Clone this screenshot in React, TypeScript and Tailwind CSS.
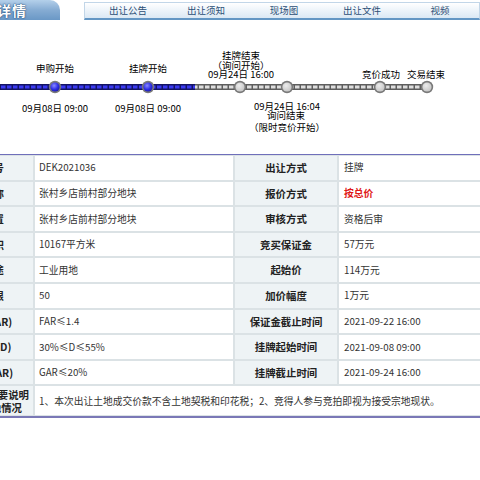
import React from "react";

const navItems = ["出让公告", "出让须知", "现场图", "出让文件", "视频"];

type Row = { l1: string; v1: string; l2: string; v2: string; red?: boolean };

const rows: Row[] = [
  { l1: "宗地编号", v1: "DEK2021036", l2: "出让方式", v2: "挂牌" },
  { l1: "宗地名称", v1: "张村乡店前村部分地块", l2: "报价方式", v2: "按总价", red: true },
  { l1: "宗地位置", v1: "张村乡店前村部分地块", l2: "审核方式", v2: "资格后审" },
  { l1: "出让面积", v1: "10167平方米", l2: "竞买保证金", v2: "57万元" },
  { l1: "土地用途", v1: "工业用地", l2: "起始价", v2: "114万元" },
  { l1: "出让年限", v1: "50", l2: "加价幅度", v2: "1万元" },
  { l1: "容积率(FAR)", v1: "FAR≤1.4", l2: "保证金截止时间", v2: "2021-09-22 16:00" },
  { l1: "建筑密度(D)", v1: "30%≤D≤55%", l2: "挂牌起始时间", v2: "2021-09-08 09:00" },
  { l1: "绿地率(GAR)", v1: "GAR≤20%", l2: "挂牌截止时间", v2: "2021-09-24 16:00" },
];

// timeline nodes: x center, reached?
const nodes = [
  { x: 55, on: true },
  { x: 148, on: true },
  { x: 240, on: false },
  { x: 287, on: false },
  { x: 380, on: false },
  { x: 427, on: false },
];

function Label({ x, y, children }: { x: number; y: number; children: React.ReactNode }) {
  return (
    <div
      className="absolute -translate-x-1/2 whitespace-nowrap text-[9.5px] leading-[11px] text-black"
      style={{ left: x, top: y - 5.5 }}
    >
      {children}
    </div>
  );
}

function Track() {
  return (
    <svg width="480" height="16" viewBox="0 0 480 16" className="absolute left-0" style={{ top: 57 }}>
      <defs>
        <pattern id="bluePat" x="0" y="0" width="6" height="6" patternUnits="userSpaceOnUse">
          <rect width="6" height="6" fill="#141464" />
          <rect x="1" y="1.5" width="4.5" height="3" fill="#3a3af2" />
        </pattern>
        <pattern id="greyPat" x="0" y="0" width="6" height="6" patternUnits="userSpaceOnUse">
          <rect width="6" height="6" fill="#5e5e5e" />
          <rect x="1" y="1.5" width="4.5" height="3" fill="#dedede" />
        </pattern>
        <radialGradient id="blueNode" cx="0.4" cy="0.35" r="0.7">
          <stop offset="0" stopColor="#8a8aff" />
          <stop offset="0.6" stopColor="#2f2fe6" />
          <stop offset="1" stopColor="#1a1aa8" />
        </radialGradient>
        <radialGradient id="greyNode" cx="0.4" cy="0.35" r="0.7">
          <stop offset="0" stopColor="#ececec" />
          <stop offset="1" stopColor="#c4c4c4" />
        </radialGradient>
      </defs>
      <g transform="translate(0,5)">
        <rect x="0" y="0" width="195" height="6" fill="url(#bluePat)" />
        <rect x="195" y="0" width="232" height="6" fill="url(#greyPat)" />
      </g>
      {nodes.map((n) => (
        <g key={n.x}>
          <circle cx={n.x} cy="8" r="6.2" fill="#7a7a7a" />
          <circle cx={n.x} cy="8" r="4.6" fill={n.on ? "url(#blueNode)" : "url(#greyNode)"} />
        </g>
      ))}
    </svg>
  );
}

export default function App() {
  return (
    <div className="w-[480px] h-[480px] overflow-hidden bg-white font-['Noto_Sans_CJK_SC','Noto_Sans',sans-serif]">
      {/* Header tabs */}
      <div className="flex items-start h-[22px]">
        <div className="w-[74px] h-[20px] rounded-tr-[10px] bg-gradient-to-b from-[#b4d0ea] via-[#86acd3] to-[#6a98c6] flex items-center overflow-hidden">
          <span className="ml-[-3px] text-[14px] font-bold leading-none tracking-[1px] text-white [text-shadow:0_0_2px_#1b4a7a,0_0_1px_#1b4a7a]">
            详情
          </span>
        </div>
        <div className="ml-[24px] mt-[2px] flex-1 h-[18px] pl-[4px] flex bg-gradient-to-b from-white to-[#dbe8f4] border border-[#c2d6e8] border-b-2 border-b-[#6396c4]">
          {navItems.map((t) => (
            <div key={t} className="w-[78px] shrink-0 flex items-center justify-center text-[9.5px] text-[#2b4e75]">
              {t}
            </div>
          ))}
        </div>
      </div>

      {/* Progress timeline */}
      <div className="relative h-[132px]">
        <Label x={55} y={46}>申购开始</Label>
        <Label x={148} y={46}>挂牌开始</Label>
        <Label x={241} y={33}>挂牌结束</Label>
        <Label x={241} y={43}>（询问开始）</Label>
        <Label x={241} y={52}>09月24日 16:00</Label>
        <Label x={381} y={52}>竞价成功</Label>
        <Label x={426} y={52}>交易结束</Label>
        <Track />
        <Label x={55} y={86}>09月08日 09:00</Label>
        <Label x={148} y={86}>09月08日 09:00</Label>
        <Label x={287} y={84}>09月24日 16:04</Label>
        <Label x={286} y={93}>询问结束</Label>
        <Label x={287} y={105}>（限时竞价开始）</Label>
      </div>

      {/* Detail table */}
      <div className="overflow-hidden border-t-[1.5px] border-t-[#6f6fba] border-b-2 border-b-[#7a78b6]">
        <div className="ml-[-67px] w-[620px] grid grid-cols-[100px_198px_102px_280px] gap-[2px] pt-[1px] pb-[1px] bg-[#dbe2e5] text-[9.75px] text-[#333]">
          {rows.map((r) => (
            <React.Fragment key={r.l1}>
              <div className="h-[23.6px] bg-[#eef3f5] flex items-center justify-center font-bold text-[10.4px] text-[#222] whitespace-nowrap">
                {r.l1}
              </div>
              <div className="h-[23.6px] bg-white flex items-center pl-[4px]">{r.v1}</div>
              <div className="h-[23.6px] bg-[#eef3f5] flex items-center justify-center font-bold text-[10.4px] text-[#222] whitespace-nowrap">
                {r.l2}
              </div>
              <div className={`h-[23.6px] bg-white flex items-center pl-[5px] ${r.red ? "text-[#e01818] font-bold" : ""}`}>
                {r.v2}
              </div>
            </React.Fragment>
          ))}
          <div className="h-[29px] bg-[#eef3f5] flex flex-col justify-center items-end font-bold text-[10.4px] leading-[13px] text-[#222] whitespace-nowrap">
            <div className="pr-[4px]">其他需要说明</div>
            <div className="pr-[11px]">的宗地情况</div>
          </div>
          <div className="col-span-3 h-[29px] bg-white flex items-center pl-[4px] whitespace-nowrap">
            1、本次出让土地成交价款不含土地契税和印花税；2、竞得人参与竞拍即视为接受宗地现状。
          </div>
        </div>
      </div>
    </div>
  );
}
